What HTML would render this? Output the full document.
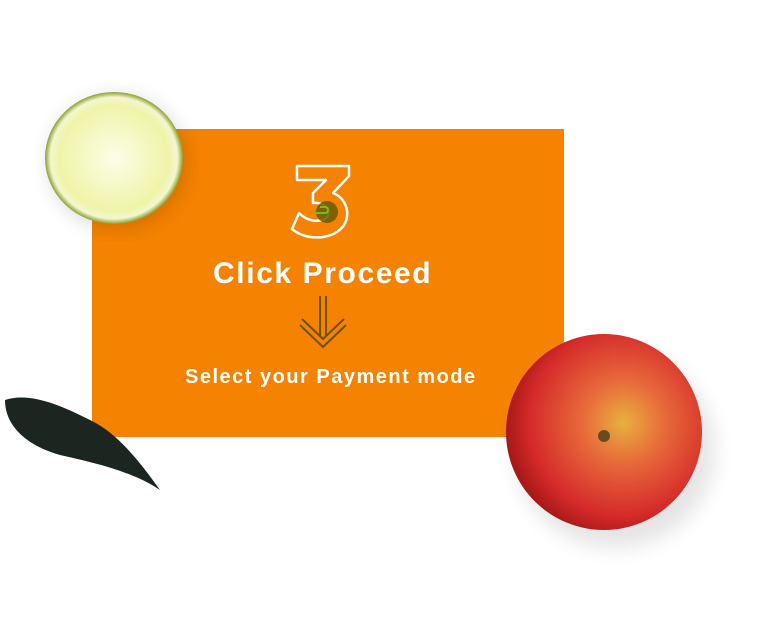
<!DOCTYPE html>
<html><head><style>
body{margin:0;width:777px;height:643px;background:#fff;position:relative;overflow:hidden;font-family:"Liberation Sans",sans-serif}
.box{position:absolute;left:92px;top:129px;width:472px;height:308px;background:#f58200}
.t1{position:absolute;left:213px;top:257px;color:#fff;font-weight:bold;font-size:30px;letter-spacing:1.6px;white-space:nowrap}
.t2{position:absolute;left:185px;top:366px;color:#fff;font-weight:bold;font-size:20px;letter-spacing:1.5px;white-space:nowrap}
</style></head><body>
<div class="box"></div>
<svg style="position:absolute;left:0;top:0" width="777" height="643">
<defs>
<radialGradient id="lime" cx="0.5" cy="0.5" r="0.5"><stop offset="0" stop-color="#fdfde8"/><stop offset="0.8" stop-color="#eef4a8"/><stop offset="0.92" stop-color="#f4f6d0"/><stop offset="1" stop-color="#8aa02c"/></radialGradient>
<radialGradient id="apple" cx="0.6" cy="0.45" r="0.6"><stop offset="0" stop-color="#e8b040"/><stop offset="0.35" stop-color="#e86a3a"/><stop offset="0.8" stop-color="#d52a2a"/><stop offset="1" stop-color="#a81818"/></radialGradient>
<filter id="sh"><feGaussianBlur stdDeviation="10"/></filter>
</defs>
<ellipse cx="615" cy="450" rx="100" ry="98" fill="#000" opacity="0.1" filter="url(#sh)"/>
<ellipse cx="117" cy="162" rx="68" ry="66" fill="#000" opacity="0.15" filter="url(#sh)"/>
<ellipse cx="114" cy="158" rx="69" ry="66" fill="url(#lime)"/>
<circle cx="604" cy="432" r="98" fill="url(#apple)"/>
<circle cx="604" cy="436" r="6" fill="#6b4a20"/>
<path d="M5 400 C30 392 60 405 90 420 C115 432 135 455 160 490 C130 470 90 462 60 455 C25 445 5 425 5 400Z" fill="#1c2620"/>
<path d="M297 166 H349 V176 L333 193 C352 200 355 232 323 237 C307 239 297 233 292 229 L299 213 C306 220 316 223 325 219 C333 212 327 202 313 203 V193 L326 180 H297 Z" fill="none" stroke="#fff" stroke-width="2.5" stroke-linejoin="round"/>
<circle cx="327" cy="212" r="11" fill="#6b5a00" opacity="0.85"/>
<path d="M314 213 H325 a3 3 0 0 0 0 -6 H320" fill="none" stroke="#6ec21c" stroke-width="2"/>
<line x1="320" y1="296" x2="320" y2="336" stroke="#6b5200" stroke-width="2"/>
<line x1="326" y1="296" x2="326" y2="336" stroke="#6b5200" stroke-width="2"/>
<path d="M300 325 L323 347 L346 325 M302 319 L323 339 L344 319" fill="none" stroke="#6b5200" stroke-width="2"/>
</svg>
<div class="t1">Click Proceed</div>
<div class="t2">Select your Payment mode</div>
</body></html>
